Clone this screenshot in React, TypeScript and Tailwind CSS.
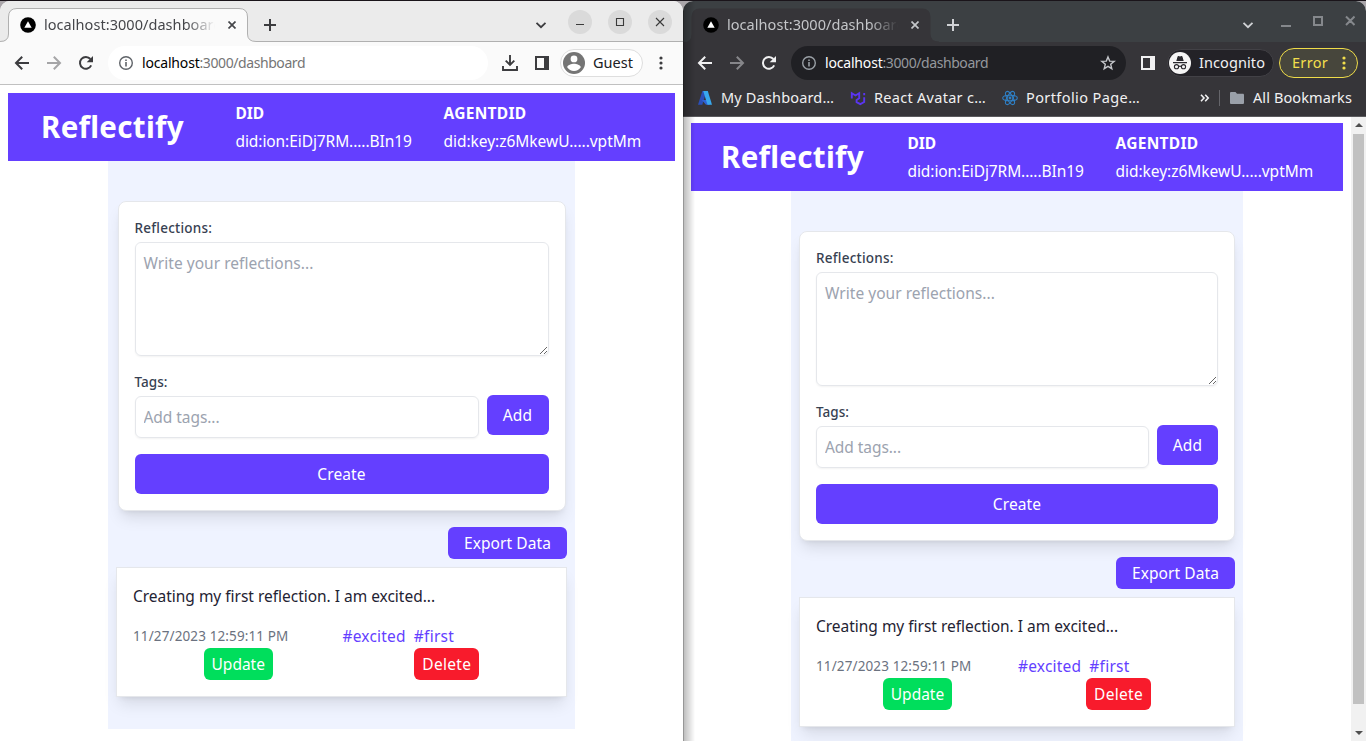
import type { ReactNode } from "react";

type IconProps = { className?: string };

function BackIcon({ className = "" }: IconProps) {
  return (
    <svg viewBox="0 0 16 16" className={`size-4 shrink-0 ${className}`} fill="none" stroke="currentColor" strokeWidth="2">
      <path d="M15 8H2.4M8.2 1.8 2 8l6.2 6.2" />
    </svg>
  );
}

function ReloadIcon({ className = "" }: IconProps) {
  return (
    <svg viewBox="0 0 16 16" className={`size-4 shrink-0 ${className}`}>
      <path d="M13.2 10.4A5.9 5.9 0 1 1 12.4 4" fill="none" stroke="currentColor" strokeWidth="2" />
      <path d="M15 1v6.3H8.7z" fill="currentColor" />
    </svg>
  );
}

function InfoIcon({ className = "" }: IconProps) {
  return (
    <svg viewBox="0 0 16 16" className={`size-4 shrink-0 ${className}`}>
      <circle cx="8" cy="8" r="6.3" fill="none" stroke="currentColor" strokeWidth="1.4" />
      <path d="M7.2 7h1.6v4.4H7.2zM7.2 4.4h1.6V6H7.2z" fill="currentColor" />
    </svg>
  );
}

function ChevronIcon({ className = "" }: IconProps) {
  return (
    <svg viewBox="0 0 12 12" className={`size-3 shrink-0 ${className}`} fill="none" stroke="currentColor" strokeWidth="1.8">
      <path d="M1.5 3.8 6 8.2l4.5-4.4" />
    </svg>
  );
}

function DownloadIcon({ className = "" }: IconProps) {
  return (
    <svg viewBox="0 0 16 16" className={`size-4 shrink-0 ${className}`} fill="none" stroke="currentColor" strokeWidth="1.9">
      <path d="M8 0v9.5M3.7 5.6 8 9.900l4.300-4.300M1 11v4h14v-4" />
    </svg>
  );
}

function PanelIcon({ className = "" }: IconProps) {
  return (
    <svg viewBox="0 0 14 14" className={`size-3.5 shrink-0 ${className}`}>
      <path fillRule="evenodd" d="M0 0h14v14H0zM2 2v10h7V2z" fill="currentColor" />
    </svg>
  );
}

function DotsIcon({ className = "" }: IconProps) {
  return (
    <svg viewBox="0 0 4 14" className={`h-3.5 w-1 shrink-0 ${className}`} fill="currentColor">
      <circle cx="2" cy="2" r="1.6" />
      <circle cx="2" cy="7" r="1.6" />
      <circle cx="2" cy="12" r="1.6" />
    </svg>
  );
}

function GuestAvatar() {
  return (
    <svg viewBox="0 0 22 22" className="size-[22px] shrink-0">
      <circle cx="11" cy="11" r="11" fill="#757575" />
      <circle cx="11" cy="6.9" r="3.4" fill="#fff" />
      <path d="M4.200 15.200c0-2.300 4.500-3.500 6.800-3.500s6.800 1.200 6.800 3.500c-1.500 2.300-4 3.700-6.800 3.700s-5.300-1.400-6.800-3.700z" fill="#fff" />
    </svg>
  );
}

function IncognitoAvatar() {
  return (
    <svg viewBox="0 0 22 22" className="size-[22px] shrink-0">
      <circle cx="11" cy="11" r="11" fill="#f5f5f5" />
      <path d="M7.300 8.900 8.500 4.700c.2-.6.7-.8 1.200-.6l1.300.4 1.300-.4c.5-.2 1 0 1.200.6l1.200 4.200z" fill="#2a292e" />
      <path d="M4 10.700h14" stroke="#2a292e" strokeWidth="1.2" />
      <g fill="none" stroke="#2a292e" strokeWidth="1.1">
        <circle cx="7.5" cy="14.7" r="2.1" />
        <circle cx="14.5" cy="14.7" r="2.1" />
        <path d="M9.600 14.500q1.400-.8 2.800 0" />
      </g>
    </svg>
  );
}

function Favicon() {
  return (
    <svg viewBox="0 0 16 16" className="size-4 shrink-0">
      <circle cx="8" cy="8" r="7.8" fill="#000" />
      <path d="M8 4.200 11.700 10.700H4.300z" fill="#fff" />
    </svg>
  );
}

function StarIcon({ className = "" }: IconProps) {
  return (
    <svg viewBox="0 0 16 16" className={`size-4 shrink-0 ${className}`} fill="none" stroke="currentColor" strokeWidth="1.4">
      <path d="m8 1.900 1.700 4.200 4.500.3-3.500 2.900 1.100 4.400L8 11.300l-3.800 2.400 1.100-4.400-3.500-2.900 4.500-.3z" />
    </svg>
  );
}

function AzureIcon() {
  return (
    <svg viewBox="0 0 16 16" className="size-4 shrink-0">
      <path d="M5.400 1h4.200L5.300 14.800H1z" fill="#2b4fb8" />
      <path d="M4.800 10h6.400l1.500 4.700H9z" fill="#2f63d6" />
      <path d="M6.200 1h4.600L15 14.800h-4.500z" fill="#38a8ee" />
    </svg>
  );
}

function MuiIcon() {
  return (
    <svg viewBox="0 0 16 16" className="size-4 shrink-0" fill="none" stroke="#5a35f0" strokeWidth="1.9">
      <path d="M1.800 8.500V3.200L5.500 5.500 9.200 3.200v5L6.600 9.900v2.300l3.700 2 3.900-2.200V7.300M14.200 5.200V3" />
    </svg>
  );
}

function ReactIcon() {
  return (
    <svg viewBox="0 0 16 16" className="size-4 shrink-0" fill="none" stroke="#2f7fc4" strokeWidth="1.1">
      <ellipse cx="8" cy="8" rx="7.3" ry="2.8" />
      <ellipse cx="8" cy="8" rx="7.3" ry="2.8" transform="rotate(60 8 8)" />
      <ellipse cx="8" cy="8" rx="7.3" ry="2.8" transform="rotate(120 8 8)" />
      <circle cx="8" cy="8" r="1.4" fill="#2f7fc4" stroke="none" />
    </svg>
  );
}

function FolderIcon() {
  return (
    <svg viewBox="0 0 14 12" className="h-3 w-3.5 shrink-0">
      <path d="M1.300 0h4.200L7 1.800h5.700c.8 0 1.300.5 1.300 1.200v7.700c0 .8-.5 1.300-1.300 1.300H1.300C.5 12 0 11.500 0 10.700V1.300C0 .5.5 0 1.300 0z" fill="#9aa0a9" />
    </svg>
  );
}

function Tab({ dark = false }: { dark?: boolean }) {
  return (
    <div className={`relative flex h-full w-[256px] shrink-0 items-center pt-[7px] pl-5 ${dark ? "text-[#c4c6c9]" : "text-[#45464a]"}`}>
      <svg viewBox="0 0 256 42" className="absolute top-0 left-0 h-[42px] w-[256px]">
        <path
          d="M0 41.500Q8.500 41.500 8.500 33V16Q8.500 7.500 17 7.500H239Q247.500 7.500 247.500 16V33Q247.500 40.500 256 40.500V42H0z"
          fill={dark ? "#363539" : "#fafafa"}
        />
        {!dark && (
          <path
            d="M0 40.500Q8.500 40.500 8.500 33V16Q8.500 7.500 17 7.500H239Q247.500 7.500 247.500 16V33Q247.500 40.500 256 40.500"
            fill="none"
            stroke="#b0b0b0"
          />
        )}
      </svg>
      <div className="relative flex items-center">
        <Favicon />
        <span className="-mt-0.5 ml-2 w-[171px] overflow-hidden [mask-image:linear-gradient(to_right,black_142px,transparent_171px)] text-[14.5px] leading-5 tracking-[0.05px] whitespace-nowrap">
          localhost:3000/dashboard
        </span>
        <svg viewBox="0 0 8 8" className="ml-[13px] size-2" stroke="currentColor" strokeWidth="1.7">
          <path d="m.5.5 7 7M7.500.5l-7 7" />
        </svg>
      </div>
    </div>
  );
}

function PlusIcon({ className = "" }: IconProps) {
  return (
    <svg viewBox="0 0 12 12" className={`size-3 shrink-0 ${className}`} stroke="currentColor" strokeWidth="2">
      <path d="M6 0v12M0 6h12" />
    </svg>
  );
}

function Address({ host, path }: { host: string; path: string }) {
  return (
    <span className="ml-2 flex text-[14px] leading-5">
      <span className={`tracking-[-0.18px] ${host}`}>localhost</span>
      <span className={`tracking-[-0.42px] ${path}`}>:3000/dashboard</span>
    </span>
  );
}

function WindowButton({ children }: { children: ReactNode }) {
  return (
    <span className="flex size-6 items-center justify-center rounded-full bg-[#dadada]">
      <svg viewBox="0 0 10 10" className="size-2.5" fill="none" stroke="#3a3a3a" strokeWidth="1.1">
        {children}
      </svg>
    </span>
  );
}

type DashboardProps = {
  headerClass: string;
  addClass: string;
  columnClass: string;
};

function Dashboard({ headerClass, addClass, columnClass }: DashboardProps) {
  const button = "rounded-md bg-[#643fff] text-white";
  const field = "block w-full rounded-md border border-gray-200 p-2 text-[15.5px] leading-6 shadow-xs placeholder:text-[#9ca3af]";
  return (
    <div className="text-[15.5px] leading-6">
      <header className={`flex h-[68px] items-center bg-[#643fff] text-white ${headerClass}`}>
        <h1 className="w-[144px] text-[29.5px] leading-9 font-bold tracking-[0.3px]">Reflectify</h1>
        <div className="flex gap-8">
          <div className="flex w-[176px] flex-col gap-1">
            <b className="tracking-[-0.07px]">DID</b>
            <span className="tracking-[-0.08px]">did:ion:EiDj7RM.....BIn19</span>
          </div>
          <div className="flex flex-col gap-1">
            <b className="tracking-[0.3px]">AGENTDID</b>
            <span className="tracking-[-0.03px]">did:key:z6MkewU.....vptMm</span>
          </div>
        </div>
      </header>
      <main className={`h-[568px] bg-[#eff3ff] px-2 pt-10 ${columnClass}`}>
        <form className="mx-auto max-w-md rounded-lg border border-gray-200 bg-white p-4 shadow-lg">
          <label className="block text-[13.5px] leading-5 font-medium tracking-[0.23px] text-[#374151]">Reflections:</label>
          <textarea placeholder="Write your reflections..." className={`mt-1 h-[114px] resize tracking-[0.03px] ${field}`} />
          <label className="mt-4 block text-[13.5px] leading-5 font-medium tracking-[0.05px] text-[#374151]">Tags:</label>
          <div className="mt-1 flex h-[42px] gap-2">
            <input placeholder="Add tags..." className={`min-w-0 flex-1 tracking-[-0.06px] ${field}`} />
            <button type="button" className={`-mt-px h-10 tracking-[0.18px] ${addClass} ${button}`}>
              Add
            </button>
          </div>
          <button type="button" className={`mt-4 block h-10 w-full tracking-[0.14px] ${button}`}>
            Create
          </button>
        </form>
        <div className="mt-4 flex justify-end">
          <button type="button" className={`h-8 w-[119px] tracking-[0.09px] ${button}`}>
            Export Data
          </button>
        </div>
        <article className="mt-2 border border-gray-200 bg-white p-4 shadow-lg">
          <p className="tracking-[-0.02px] text-[#1f2333]">Creating my first reflection. I am excited...</p>
          <div className="mt-4 grid grid-cols-2">
            <time className="text-[13.5px] tracking-[0.12px] text-[#6b7280]">11/27/2023 12:59:11 PM</time>
            <div className="flex gap-2 pl-px text-[#643fff]">
              <span className="tracking-[0.2px]">#excited</span>
              <span className="tracking-[0.27px]">#first</span>
            </div>
            <div className="flex justify-center pl-0.5">
              <button type="button" className="h-8 w-[69px] rounded-md bg-[#00de5c] text-white">
                Update
              </button>
            </div>
            <div className="flex justify-center pl-0.5">
              <button type="button" className="h-8 w-[65px] rounded-md bg-[#f81b2c] tracking-[0.3px] text-white">
                Delete
              </button>
            </div>
          </div>
        </article>
      </main>
    </div>
  );
}

function GuestWindow() {
  return (
    <section className="flex h-[740px] w-[683px] flex-col overflow-hidden rounded-t-[10px] bg-white">
      <div className="flex h-[41px] shrink-0 bg-[#ebebeb]">
        <Tab />
        <div className="flex flex-1 items-center border-b border-[#b0b0b0] text-[#3c3c3f]">
          <PlusIcon className="mt-[7px] ml-2" />
          <ChevronIcon className="mt-[7px] ml-auto" />
          <div className="mt-0.5 mr-[11px] ml-[21px] flex gap-4">
            <WindowButton>
              <path d="M1 7.500h8" />
            </WindowButton>
            <WindowButton>
              <path d="M1.500 1.500h7v7h-7z" />
            </WindowButton>
            <WindowButton>
              <path d="m1 1 8 8M9 1 1 9" />
            </WindowButton>
          </div>
        </div>
      </div>
      <div className="flex h-[43px] shrink-0 items-center border-b border-[#c0c0c0] bg-[#fafafa] pl-3.5 text-[#3c3c3f]">
        <BackIcon />
        <BackIcon className="ml-4 rotate-180 text-[#a5a5a7]" />
        <ReloadIcon className="ml-4" />
        <div className="ml-3.5 flex h-[34px] w-[380px] items-center rounded-full bg-white pl-2.5">
          <InfoIcon className="text-[#5f6368]" />
          <Address host="text-black" path="text-[#757575]" />
        </div>
        <DownloadIcon className="ml-3.5" />
        <PanelIcon className="ml-[17px]" />
        <div className="ml-[11px] flex h-7 w-[83px] items-center rounded-full border border-[#dedede] bg-white pl-[2px]">
          <GuestAvatar />
          <span className="-mt-0.5 ml-2 text-[14.5px] leading-5 text-[#202124]">Guest</span>
        </div>
        <DotsIcon className="ml-4" />
      </div>
      <div className="flex-1 p-2">
        <Dashboard headerClass="pl-[33px] gap-[50.5px]" addClass="w-[62px]" columnClass="ml-[100px] w-[467px]" />
      </div>
    </section>
  );
}

function IncognitoWindow() {
  return (
    <section className="relative flex h-[740px] w-[683px] flex-col overflow-hidden rounded-t-[10px] bg-white">
      <div className="flex h-[41px] shrink-0 bg-[#3c4043]">
        <Tab dark />
        <div className="flex flex-1 items-center text-[#d0d2d5]">
          <PlusIcon className="mt-[7px] ml-2" />
          <ChevronIcon className="mt-[7px] ml-auto" />
          <svg viewBox="0 0 74 12" className="mr-[11px] ml-[27px] h-3 w-[74px] -translate-y-px" fill="none" stroke="#85888c" strokeWidth="2">
            <path d="M0 11h10M33 2h8v8h-8zM65 1.500l8.500 8.500M73.500 1.500 65 10" />
          </svg>
        </div>
      </div>
      <div className="flex h-[43px] shrink-0 items-center bg-[#363539] pb-px pl-3.5 text-[#f1f1f2]">
        <BackIcon />
        <BackIcon className="ml-4 rotate-180 text-[#86868a]" />
        <ReloadIcon className="ml-4" />
        <div className="ml-3.5 flex h-[34px] w-[335px] items-center rounded-full bg-[#202024] pr-2.5 pl-2.5">
          <InfoIcon className="text-[#9aa0a6]" />
          <Address host="text-white" path="text-[#95989d]" />
          <StarIcon className="ml-auto text-[#c4c6ca]" />
        </div>
        <PanelIcon className="ml-[15px]" />
        <div className="ml-3 flex h-7 w-[107px] items-center rounded-full border border-[#424146] bg-[#232227] pl-px">
          <IncognitoAvatar />
          <span className="-mt-0.5 ml-2 text-[14.5px] leading-5 tracking-[0.09px]">Incognito</span>
        </div>
        <div className="ml-[5px] flex h-[30px] w-[79px] items-center rounded-full border border-[#efdc49] bg-[#47463c] pl-3 text-[#f3df4c]">
          <span className="-mt-0.5 text-[14.5px] leading-5 tracking-[0.3px]">Error</span>
          <DotsIcon className="ml-[14px]" />
        </div>
      </div>
      <div className="flex h-8 shrink-0 items-center border-b border-[#5b5b5e] bg-[#363539] pr-3.5 pb-[5px] pl-3.5 text-[14.5px] leading-5 text-[#f1f1f2]">
        <AzureIcon />
        <span className="-mt-0.5 ml-2 w-[129px] tracking-[0.17px]">My Dashboard…</span>
        <MuiIcon />
        <span className="-mt-0.5 ml-2 w-[128px] tracking-[0.29px]">React Avatar c…</span>
        <ReactIcon />
        <span className="-mt-0.5 ml-2 tracking-[0.4px]">Portfolio Page…</span>
        <svg viewBox="0 0 10 8" className="ml-auto h-2 w-2.5" fill="none" stroke="currentColor" strokeWidth="1.6">
          <path d="m1 .8 3 3.200-3 3.200M5.200.8l3 3.200-3 3.200" />
        </svg>
        <span className="mr-2.5 ml-[9px] h-4 w-px bg-[#65656a]" />
        <FolderIcon />
        <span className="-mt-0.5 ml-[9px] tracking-[0.11px]">All Bookmarks</span>
      </div>
      <div className="flex min-h-0 flex-1">
        <div className="flex-1 overflow-hidden px-2 pt-1.5">
          <Dashboard headerClass="pl-[30px] gap-[42.5px]" addClass="w-[61px]" columnClass="ml-[100px] w-[452px]" />
        </div>
        <div className="flex w-[15px] flex-col items-center bg-[#f1f1f1] py-1.5">
          <svg viewBox="0 0 8 4" className="h-1 w-2 shrink-0" fill="#505050">
            <path d="M4 0 8 4H0z" />
          </svg>
          <div className="mt-[7px] h-[570px] w-[11px] shrink-0 bg-[#c1c1c1]" />
          <svg viewBox="0 0 8 4" className="mt-auto h-1 w-2 shrink-0" fill="#505050">
            <path d="M0 0h8L4 4z" />
          </svg>
        </div>
      </div>
      <div className="absolute inset-y-0 left-0 w-3 border-l border-black/40 bg-linear-to-r from-black/25 to-transparent" />
    </section>
  );
}

export default function App() {
  return (
    <div className="flex h-[741px] w-[1366px] overflow-hidden border-t border-[#1a141a] bg-[#aaa6aa] font-['Noto_Sans',sans-serif]">
      <GuestWindow />
      <IncognitoWindow />
    </div>
  );
}
